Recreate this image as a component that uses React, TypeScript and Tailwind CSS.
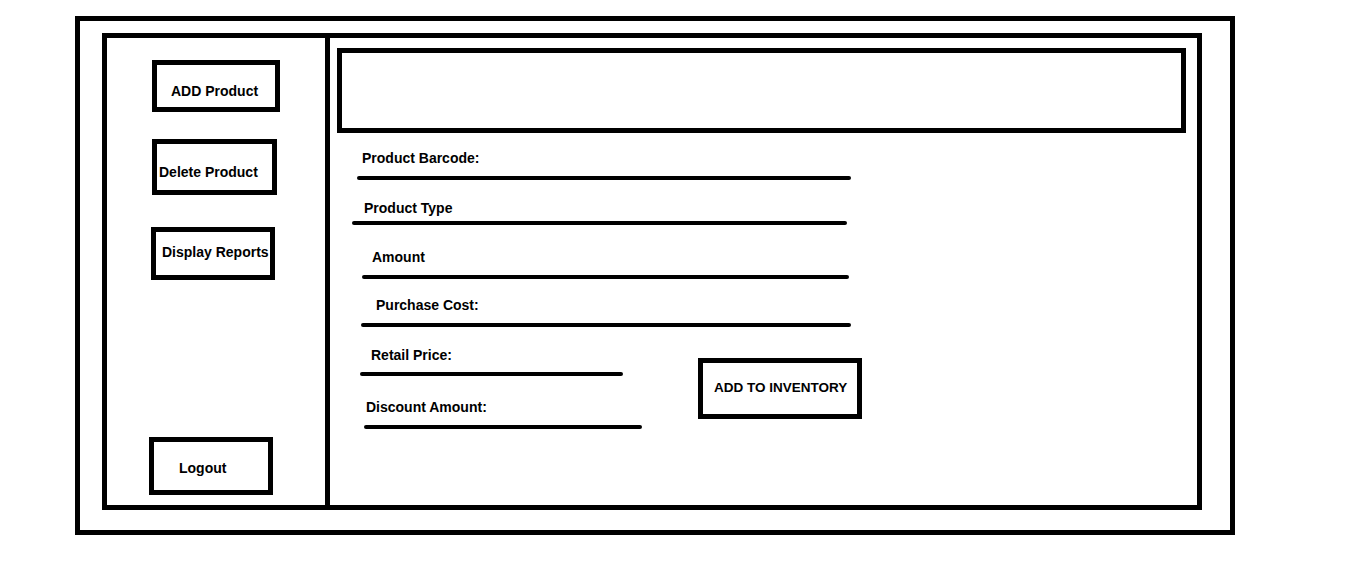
const font = { fontFamily: '"Liberation Sans", Arial, sans-serif' };

const fields = [
  { label: 'Product Barcode:', wrap: 'mt-[17px]', label_: 'pl-[32px]', line: 'mt-[10px] ml-[27px] w-[494px]' },
  { label: 'Product Type', wrap: 'mt-[20px]', label_: 'pl-[34px]', line: 'mt-[5px] ml-[22px] w-[495px]' },
  { label: 'Amount', wrap: 'mt-[24px]', label_: 'pl-[42px]', line: 'mt-[10px] ml-[32px] w-[487px]' },
  { label: 'Purchase Cost:', wrap: 'mt-[18px]', label_: 'pl-[46px]', line: 'mt-[10px] ml-[31px] w-[490px]' },
];

const lowerFields = [
  { label: 'Retail Price:', wrap: 'mt-[20px]', label_: 'pl-[41px]', line: 'mt-[9px] ml-[30px] w-[263px]' },
  { label: 'Discount Amount:', wrap: 'mt-[23px]', label_: 'pl-[36px]', line: 'mt-[10px] ml-[34px] w-[278px]' },
];

type Field = { label: string; wrap: string; label_: string; line: string };

function FormField({ f }: { f: Field }) {
  return (
    <div className={f.wrap}>
      <p className={`h-[16px] text-[14px] font-bold leading-[16px] text-black ${f.label_}`}>{f.label}</p>
      <div className={`h-[4px] rounded-full bg-black ${f.line}`} />
    </div>
  );
}

export default function App() {
  return (
    <div className="h-[568px] w-[1357px] overflow-hidden bg-white pl-[75px] pt-[16px]" style={font}>
      <div className="flex h-[519px] w-[1160px] flex-col border-[5px] border-black pb-[20px] pl-[22px] pr-[28px] pt-[12px]">
        <div className="flex flex-1 border-[5px] border-black">
          {/* sidebar */}
          <aside className="flex w-[218px] shrink-0 flex-col items-start">
            <button className="ml-[45px] mt-[22px] flex h-[52px] w-[128px] items-center border-[5px] border-black pl-[14px] pt-[10px] text-[14px] font-bold text-black">
              ADD Product
            </button>
            <button className="ml-[45px] mt-[27px] flex h-[56px] w-[125px] items-center border-[5px] border-black pl-[2px] pt-[10px] text-[14px] font-bold text-black">
              Delete Product
            </button>
            <button className="ml-[44px] mt-[32px] flex h-[53px] w-[124px] items-center border-[5px] border-black pb-[3px] pl-[6px] text-[14px] font-bold text-black">
              Display Reports
            </button>
            <button className="mb-[10px] ml-[42px] mt-auto flex h-[58px] w-[124px] items-center border-[5px] border-black pl-[25px] pt-[4px] text-[14px] font-bold text-black">
              Logout
            </button>
          </aside>

          {/* main */}
          <main className="flex flex-1 flex-col border-l-[5px] border-black">
            <div className="ml-[7px] mr-[11px] mt-[10px] h-[85px] border-[5px] border-black" />
            {fields.map((f) => (
              <FormField key={f.label} f={f} />
            ))}
            <div className="flex items-start">
              <div className="w-[368px] shrink-0">
                {lowerFields.map((f) => (
                  <FormField key={f.label} f={f} />
                ))}
              </div>
              <button className="mt-[31px] flex h-[61px] w-[164px] items-center border-[5px] border-black pl-[11px] text-[13.5px] font-bold text-black">
                ADD TO INVENTORY
              </button>
            </div>
          </main>
        </div>
      </div>
    </div>
  );
}
